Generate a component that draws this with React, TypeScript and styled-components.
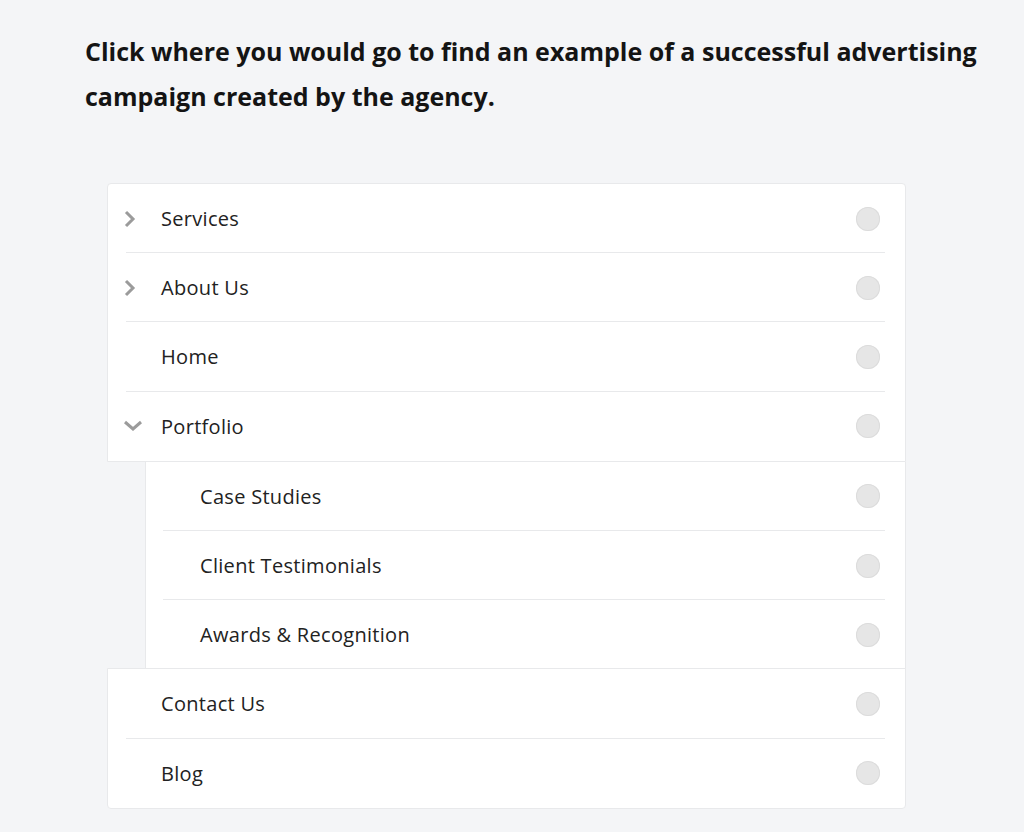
import React from 'react';
import styled, { createGlobalStyle } from 'styled-components';

const GlobalStyle = createGlobalStyle`
  html, body {
    margin: 0;
    padding: 0;
    background: #f4f5f7;
  }
  body {
    font-family: "Open Sans", Lato, Arial, sans-serif;
    color: #1f1f1f;
  }
`;

const Page = styled.div`
  padding: 29px 20px 0 85px;
`;

const Prompt = styled.h1`
  margin: 0;
  font-size: 25px;
  font-weight: 700;
  line-height: 45px;
  color: #141414;
  max-width: 910px;
`;

const Tree = styled.div`
  width: 799px;
  margin: 64px 0 0 22px;
  display: flex;
  flex-direction: column;
`;

interface GroupProps {
  $position: 'top' | 'bottom';
}

const Group = styled.div<GroupProps>`
  background: #fff;
  border: 1px solid #e8e9eb;
  border-radius: ${p => (p.$position === 'top' ? '4px 4px 0 0' : '0 0 4px 4px')};
`;

const SubGroup = styled.div`
  background: #fff;
  margin-left: 38px;
  border-left: 1px solid #e8e9eb;
  border-right: 1px solid #e8e9eb;
  margin-bottom: -1px;
`;

interface RowProps {
  $inset: number;
  $divider: boolean;
}

const Row = styled.div<RowProps>`
  position: relative;
  height: 69.2px;
  display: flex;
  align-items: center;
  padding-right: 25px;
  cursor: pointer;

  &::after {
    content: '';
    display: ${p => (p.$divider ? 'block' : 'none')};
    position: absolute;
    left: ${p => p.$inset}px;
    right: 20px;
    bottom: 0;
    height: 1px;
    background: #e8e9eb;
  }
`;

const Toggle = styled.span`
  width: 53px;
  height: 20px;
  display: flex;
  align-items: center;
  padding-left: 15px;
  box-sizing: border-box;
  color: #9b9b9b;
`;

interface LabelProps {
  $indent: number;
}

const Label = styled.span<LabelProps>`
  flex: 1;
  padding-left: ${p => p.$indent}px;
  font-size: 20px;
  letter-spacing: 0.3px;
  color: #222;
`;

const Radio = styled.span`
  width: 24px;
  height: 24px;
  border-radius: 50%;
  background: #e6e6e6;
  box-shadow: inset 0 0 0 1px #dcdcdc;
`;

const ChevronRight = () => (
  <svg width="14" height="18" viewBox="0 0 14 18" fill="none">
    <path d="M3 2l7 7-7 7" stroke="currentColor" strokeWidth="3" />
  </svg>
);

const ChevronDown = () => (
  <svg width="20" height="12" viewBox="0 0 20 12" fill="none">
    <path d="M2 2l8 7 8-7" stroke="currentColor" strokeWidth="3" />
  </svg>
);

type Item = { label: string; toggle?: 'closed' | 'open' };

const topItems: Item[] = [
  { label: 'Services', toggle: 'closed' },
  { label: 'About Us', toggle: 'closed' },
  { label: 'Home' },
  { label: 'Portfolio', toggle: 'open' },
];

const subItems: Item[] = [
  { label: 'Case Studies' },
  { label: 'Client Testimonials' },
  { label: 'Awards & Recognition' },
];

const bottomItems: Item[] = [{ label: 'Contact Us' }, { label: 'Blog' }];

const TopRow = ({ item, divider }: { item: Item; divider: boolean }) => (
  <Row $inset={18} $divider={divider}>
    <Toggle>
      {item.toggle === 'closed' && <ChevronRight />}
      {item.toggle === 'open' && <ChevronDown />}
    </Toggle>
    <Label $indent={0}>{item.label}</Label>
    <Radio />
  </Row>
);

const App = () => {
  return (
    <Page>
      <GlobalStyle />
      <Prompt>
        Click where you would go to find an example of a successful advertising campaign created
        by the agency.
      </Prompt>
      <Tree>
        <Group $position="top">
          {topItems.map((item, i) => (
            <TopRow key={item.label} item={item} divider={i < topItems.length - 1} />
          ))}
        </Group>
        <SubGroup>
          {subItems.map((item, i) => (
            <Row key={item.label} $inset={17} $divider={i < subItems.length - 1}>
              <Label $indent={54}>{item.label}</Label>
              <Radio />
            </Row>
          ))}
        </SubGroup>
        <Group $position="bottom">
          {bottomItems.map((item, i) => (
            <TopRow key={item.label} item={item} divider={i < bottomItems.length - 1} />
          ))}
        </Group>
      </Tree>
    </Page>
  );
};

export default App;
